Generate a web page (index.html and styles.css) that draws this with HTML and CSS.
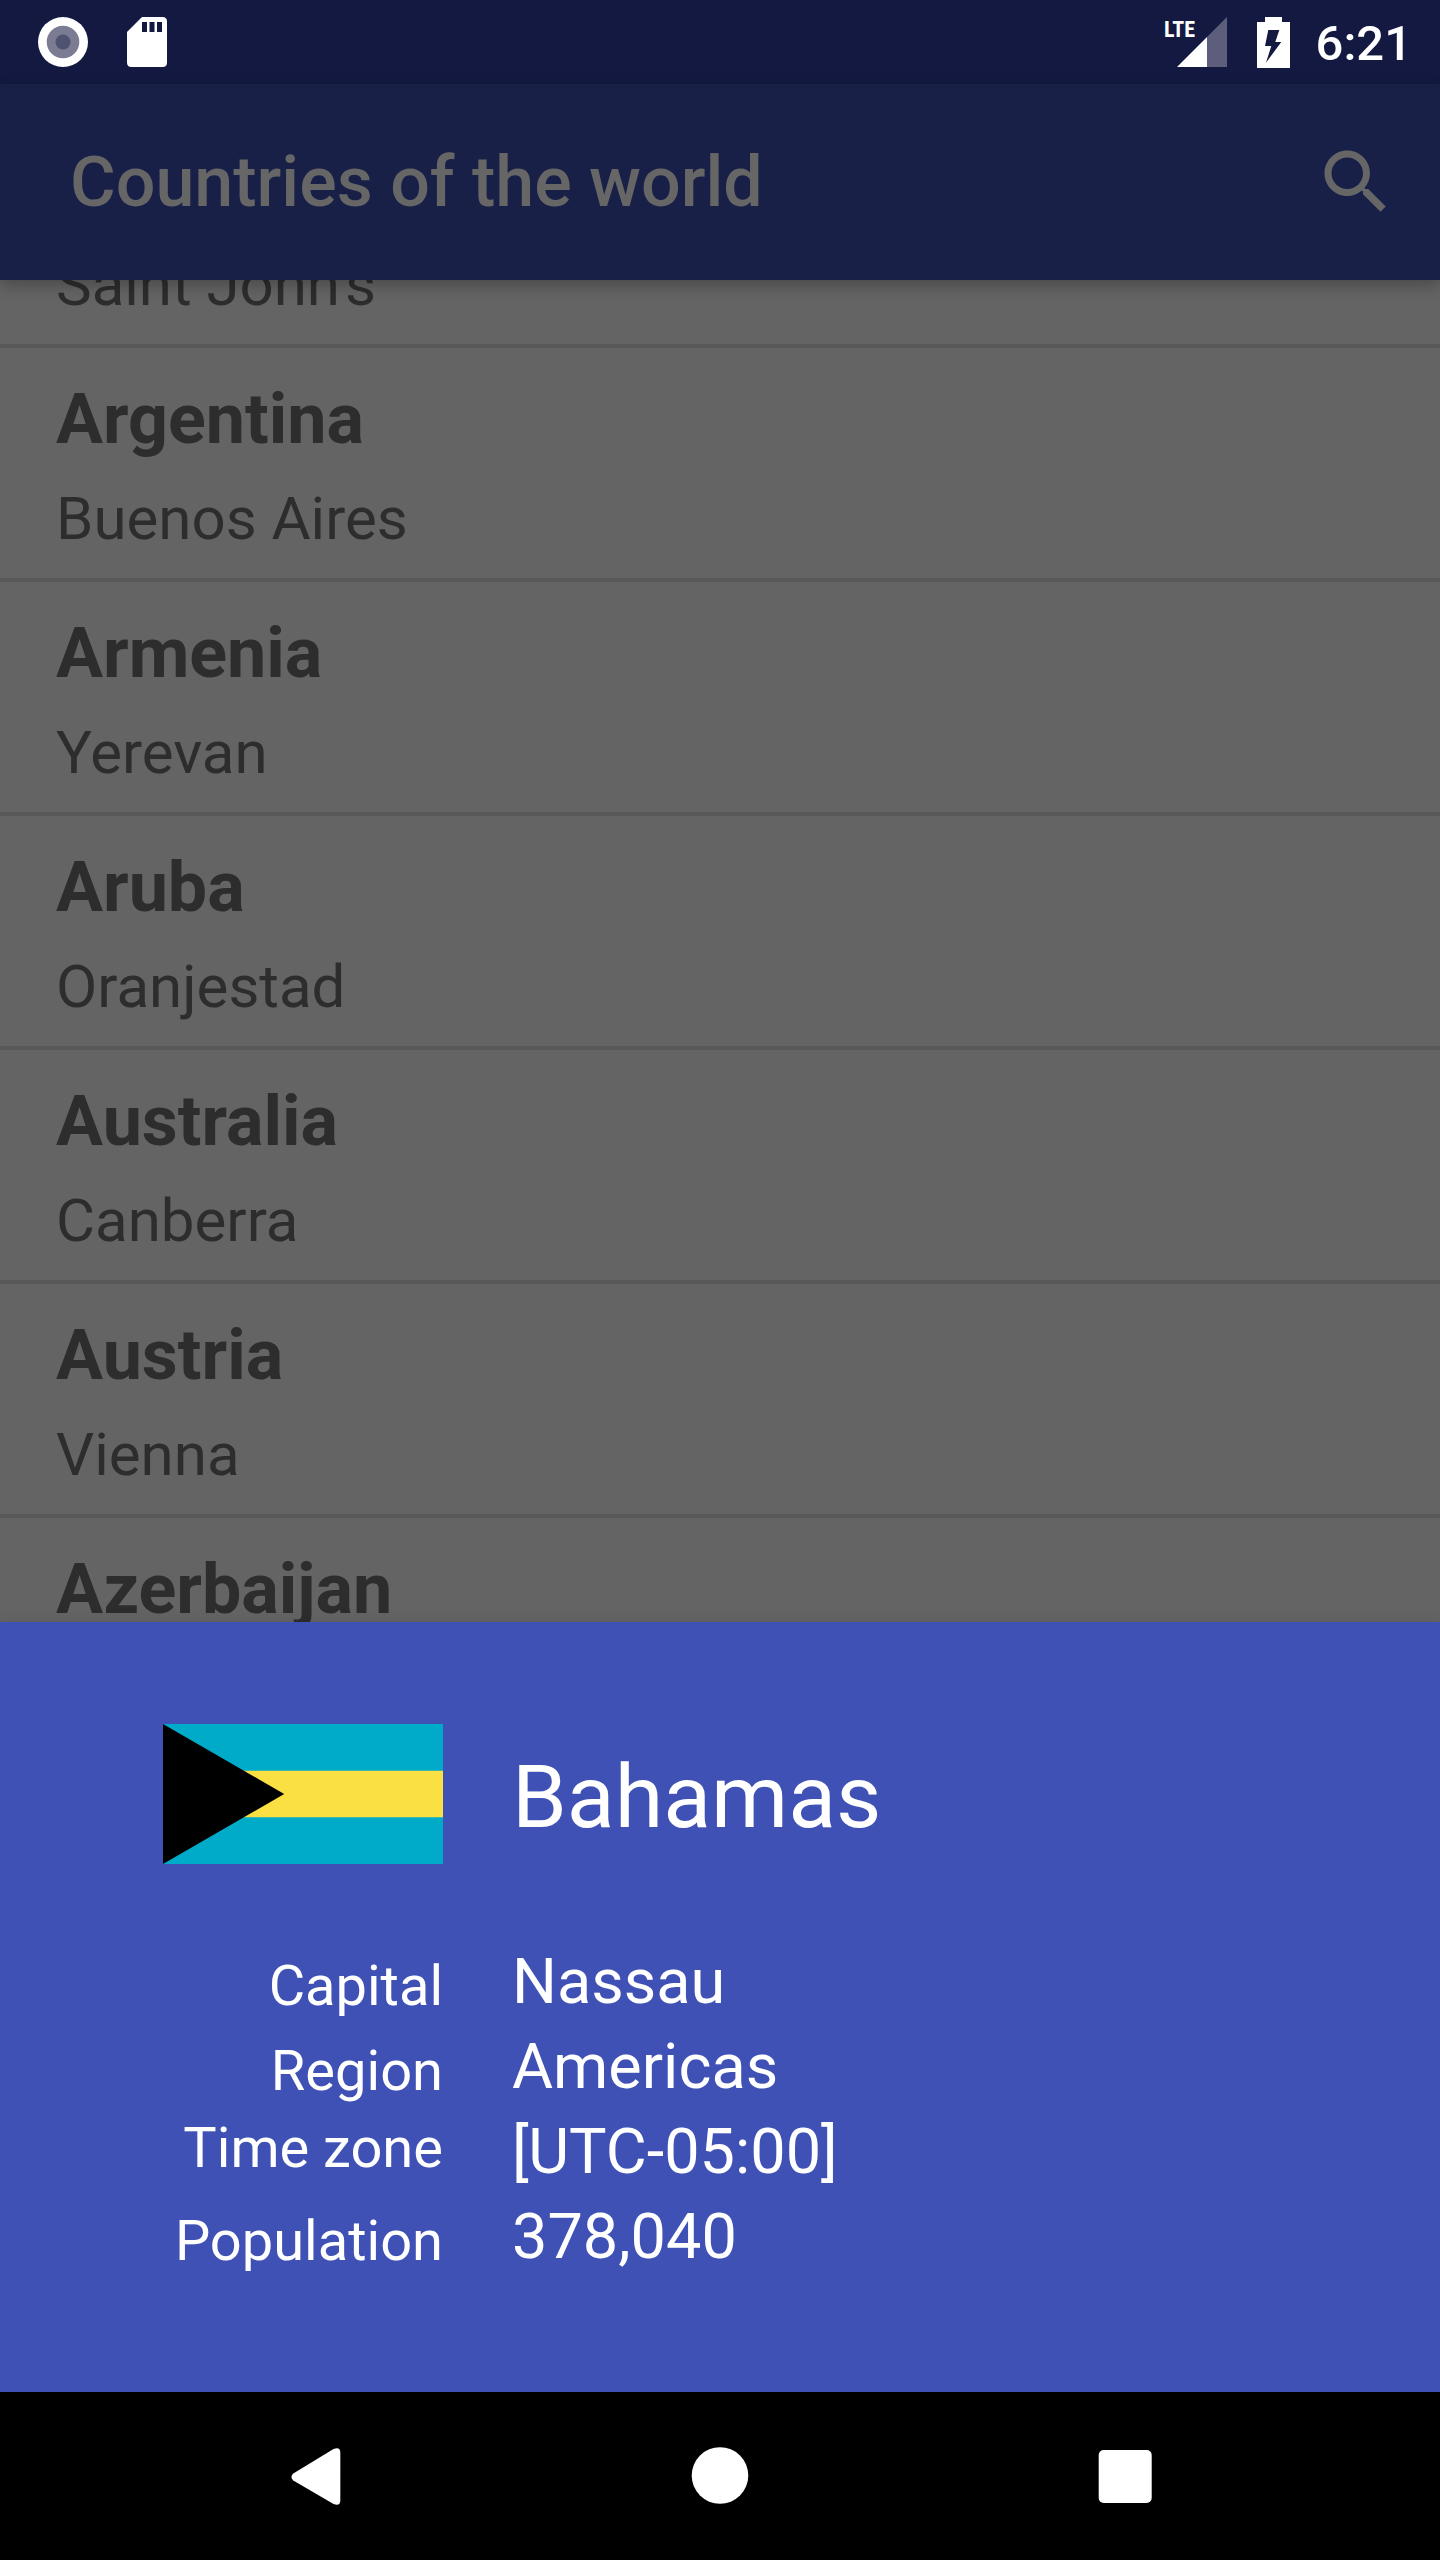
FILE: index.html
```html
<!DOCTYPE html>
<html lang="en">
<head>
  <meta charset="utf-8">
  <meta name="viewport" content="width=device-width, initial-scale=1">
  <title>Countries of the world</title>
  <link rel="stylesheet" href="styles.css">
</head>
<body>
  <div class="status-bar">
    <div class="status-group status-notifications">
      <svg width="50" height="50" viewBox="0 0 50 50" aria-hidden="true">
        <circle cx="25" cy="25" r="25" fill="#fff"/>
        <circle cx="25" cy="25" r="16.3" fill="#7b7c94"/>
        <circle cx="25" cy="25" r="7.6" fill="#4f5271"/>
      </svg>
      <svg width="40" height="50" viewBox="0 0 40 50" aria-hidden="true">
        <path fill="#fff" d="M15 0H35.500Q40 0 40 4.500V45.500Q40 50 35.500 50H4.500Q0 50 0 45.500V15Z"/>
        <path fill="#131940" d="M15 5h5v10h-5zM22.500 5h5v10h-5zM30 5h5v10h-5z"/>
      </svg>
    </div>
    <div class="status-group status-system">
      <svg class="signal" width="62" height="50" viewBox="0 0 62 50" role="img" aria-label="LTE signal">
        <path fill="#5c5e7b" d="M62 0V50H42V20Z"/>
        <path fill="#fff" d="M12 50L42 20V50Z"/>
        <text class="signal-type" x="-1" y="20">LTE</text>
      </svg>
      <svg class="battery" width="33" height="51" viewBox="0 0 33 51" aria-hidden="true">
        <path fill="#fff" d="M8 0H25V5H33V51H0V5H8Z"/>
        <path fill="#131940" d="M11.300 13H22.300L18.300 25H24.300L9 45.700L14.300 29H8Z"/>
      </svg>
      <time class="clock">6:21</time>
    </div>
  </div>

  <header class="app-bar">
    <h1 class="app-title">Countries of the world</h1>
    <button class="icon-button" type="button" aria-label="Search">
      <svg width="84" height="84" viewBox="0 0 24 24" aria-hidden="true">
        <path fill="#666" d="M15.5,14l-0.8,0l-0.3,-0.3c1,-1.1 1.6,-2.6 1.6,-4.2C16,5.9 13.1,3 9.5,3C5.9,3 3,5.9 3,9.5S5.9,16 9.5,16c1.6,0 3.1,-0.6 4.2,-1.6l0.3,0.3l0,0.8l5,5l1.5,-1.5L15.5,14zM9.5,14C7,14 5,12 5,9.5S7,5 9.5,5C12,5 14,7 14,9.5S12,14 9.5,14z"/>
      </svg>
    </button>
  </header>

  <main class="list-area">
    <ul class="country-list">
      <li class="country"><span class="country-capital">Saint John's</span></li>
      <li class="country"><span class="country-name">Argentina</span><span class="country-capital">Buenos Aires</span></li>
      <li class="country"><span class="country-name">Armenia</span><span class="country-capital">Yerevan</span></li>
      <li class="country"><span class="country-name">Aruba</span><span class="country-capital">Oranjestad</span></li>
      <li class="country"><span class="country-name">Australia</span><span class="country-capital">Canberra</span></li>
      <li class="country"><span class="country-name">Austria</span><span class="country-capital">Vienna</span></li>
      <li class="country"><span class="country-name">Azerbaijan</span></li>
    </ul>
  </main>

  <section class="sheet" aria-labelledby="sheet-title">
    <svg class="flag" width="280" height="140" viewBox="0 0 280 140" role="img" aria-label="Flag of the Bahamas">
      <path fill="#00abc9" d="M0 0H280V140H0Z"/>
      <path fill="#fae042" d="M0 46.700H280V93.300H0Z"/>
      <path fill="#000" d="M0 0L121.200 70L0 140Z"/>
    </svg>
    <h2 class="sheet-title" id="sheet-title">Bahamas</h2>
    <dl class="facts">
      <dt>Capital</dt><dd>Nassau</dd>
      <dt>Region</dt><dd>Americas</dd>
      <dt class="label-top">Time zone</dt><dd>[UTC-05:00]</dd>
      <dt>Population</dt><dd>378,040</dd>
    </dl>
  </section>

  <nav class="nav-bar" aria-label="System navigation">
    <button class="icon-button" type="button" aria-label="Back">
      <svg width="84" height="84" viewBox="0 0 84 84" aria-hidden="true">
        <path fill="#fff" d="M20.300 39.500Q16.500 43 20.300 46.500L60.500 70Q67.300 72.500 67.300 66.500V18.500Q67.300 12.500 60.500 15Z"/>
      </svg>
    </button>
    <button class="icon-button" type="button" aria-label="Home">
      <svg width="84" height="84" viewBox="0 0 84 84" aria-hidden="true">
        <circle cx="42" cy="41.500" r="28.300" fill="#fff"/>
      </svg>
    </button>
    <button class="icon-button" type="button" aria-label="Overview">
      <svg width="84" height="84" viewBox="0 0 84 84" aria-hidden="true">
        <rect x="15.700" y="16" width="53" height="53" rx="5" fill="#fff"/>
      </svg>
    </button>
  </nav>
</body>
</html>
```
FILE: styles.css
```css
* {
  box-sizing: border-box;
}

body {
  display: flex;
  flex-direction: column;
  min-height: 100vh;
  margin: 0;
  background: #646464;
  font-family: Roboto, "Liberation Sans", sans-serif;
}

svg {
  display: block;
}

.status-bar {
  display: flex;
  justify-content: space-between;
  height: 84px;
  padding: 0 28px 0 38px;
  background: #131940;
  color: #fff;
}

.status-group {
  display: flex;
  align-items: center;
}

.status-notifications {
  gap: 39px;
}

.status-system {
  gap: 30px;
}

.signal {
  overflow: visible;
}

.signal-type {
  fill: #fff;
  font-family: "Liberation Sans Narrow", "Roboto Condensed", Roboto, sans-serif;
  font-size: 22px;
  font-weight: 700;
}

.clock {
  margin-left: -4px;
  padding-top: 4px;
  font-size: 49px;
  font-weight: 500;
  line-height: 58px;
}

.app-bar {
  display: flex;
  align-items: center;
  justify-content: space-between;
  height: 196px;
  padding: 0 42px 0 70px;
  background: #192048;
  box-shadow: 0 6px 14px rgba(0, 0, 0, 0.25);
  color: #666;
  z-index: 1;
}

.app-title {
  margin: 0;
  font-size: 70px;
  font-weight: 500;
  line-height: 82px;
}

.icon-button {
  display: flex;
  align-items: center;
  justify-content: center;
  padding: 0;
  border: 0;
  background: none;
}

.list-area {
  flex: 1 1 0;
  min-height: 240px;
  overflow: hidden;
  color: #2d2d2d;
}

/* Scrolled so that the first row sits partly under the app bar. */
.country-list {
  margin: -60px 0 0;
  padding: 0;
  list-style: none;
}

.country {
  display: flex;
  flex-direction: column;
  gap: 24px;
  padding: 30px 56px 24px;
  border-bottom: 4px solid #585858;
}

.country-name {
  font-size: 70px;
  font-weight: 700;
  line-height: 82px;
}

.country-capital {
  font-size: 60px;
  line-height: 70px;
}

.sheet {
  display: grid;
  grid-template-columns: 280px 1fr;
  column-gap: 69px;
  row-gap: 75px;
  padding: 102px 70px 118px 163px;
  background: #3f51b5;
  box-shadow: 0 0 14px rgba(0, 0, 0, 0.1);
  color: #fff;
  z-index: 1;
}

.sheet-title {
  margin: 0;
  font-size: 88px;
  font-weight: 400;
  line-height: 146px;
}

.facts {
  display: grid;
  grid-column: 1 / -1;
  grid-template-columns: subgrid;
  row-gap: 11px;
  margin: 0;
}

.facts dt {
  align-self: end;
  font-size: 56px;
  line-height: 66px;
  text-align: right;
}

.facts .label-top {
  align-self: start;
}

.facts dd {
  margin: 0;
  font-size: 63px;
  line-height: 74px;
}

.nav-bar {
  display: grid;
  grid-template-columns: repeat(3, 1fr);
  height: 168px;
  padding: 0 112px;
  background: #000;
}
```
